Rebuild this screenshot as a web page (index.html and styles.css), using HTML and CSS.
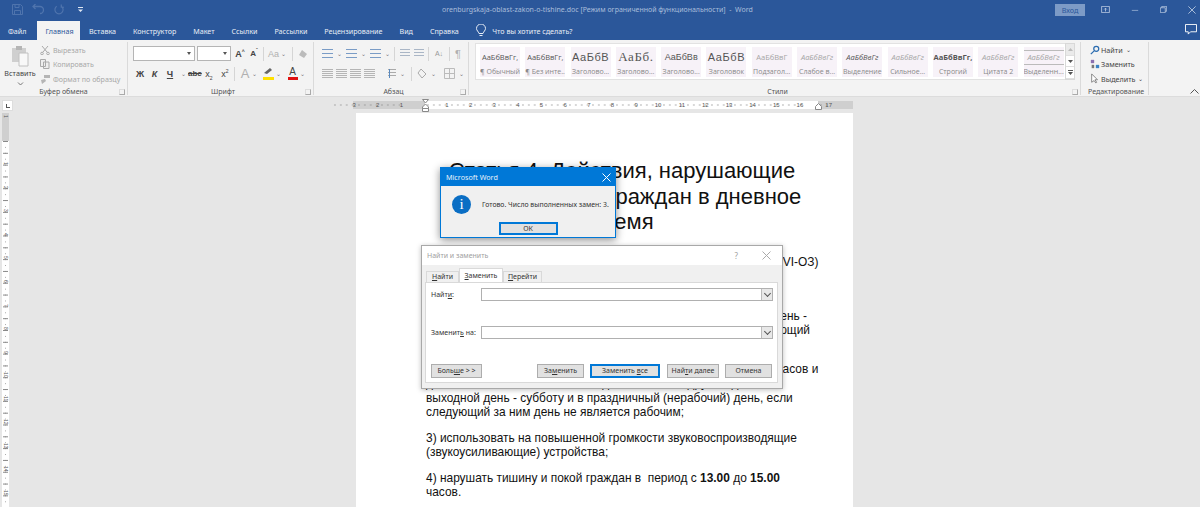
FILE: index.html
```html
<!DOCTYPE html>
<html lang="ru">
<head>
<meta charset="utf-8">
<title>Word</title>
<link rel="stylesheet" href="styles.css">
</head>
<body>
<div class="app">
  <header class="titlebar">
    <div class="qat">
      <svg width="11" height="11" viewBox="0 0 11 11" fill="none" stroke="#4f74ad"><path d="M.5.5h8l2 2v8H.5zM3 .5v3h4v-3M2.500 10.500v-4h6v4"/></svg>
      <svg width="15" height="11" viewBox="0 0 15 11" fill="none" stroke="#4f74ad" stroke-width="1.300"><path d="M9 9.500a3.500 3.500 0 0 0 0-7H2M4.500 0 2 2.500 4.500 5"/></svg>
      <svg width="10" height="11" viewBox="0 0 11 11" fill="none" stroke="#4f74ad" stroke-width="1.300"><path d="M3 2a4.500 4.500 0 1 0 5 0M8 0v3h3"/></svg>
      <svg class="qat-more" width="7" height="7" viewBox="0 0 7 7" fill="#dfe7f3"><path d="M1 1h5v1H1zM1 3.500h5L3.500 6z"/></svg>
    </div>
    <div class="doc-title">orenburgskaja-oblast-zakon-o-tishine.doc [Режим ограниченной функциональности]  -  Word</div>
    <div class="win">
      <span class="login">Вход</span>
      <svg class="w-ribbon" width="9" height="7" viewBox="0 0 11 9" fill="none" stroke="#c8d5e8"><path d="M.5.500h10v8H.5zM5.500 7V3M3.800 4.500l1.700-1.700 1.700 1.700"/></svg>
      <svg class="w-min" width="8" height="8" viewBox="0 0 10 10" stroke="#9db4d3"><path d="M1 5.500h8"/></svg>
      <svg class="w-max" width="7" height="7" viewBox="0 0 10 10" fill="none" stroke="#c8d5e8"><path d="M.5 2.500h7v7h-7zM2.500 2.500v-2h7v7h-2"/></svg>
      <svg width="8" height="8" viewBox="0 0 10 10" stroke="#c8d5e8"><path d="M.5.500l9 9M9.500.500l-9 9"/></svg>
    </div>
  </header>
  <nav class="tabs">
    <span class="tab first">Файл</span>
    <span class="tab active">Главная</span>
    <span class="tab">Вставка</span>
    <span class="tab">Конструктор</span>
    <span class="tab">Макет</span>
    <span class="tab">Ссылки</span>
    <span class="tab">Рассылки</span>
    <span class="tab">Рецензирование</span>
    <span class="tab">Вид</span>
    <span class="tab">Справка</span>
    <span class="tell">
      <svg width="10" height="13" viewBox="0 0 10 13" fill="none" stroke="#e8eef7"><path d="M3 9.500C2.500 7.500.5 6.500.5 4.500a4.500 4.500 0 0 1 9 0c0 2-2 3-2.500 5zM3.500 11.500h3"/></svg>
      Что вы хотите сделать?
    </span>
    <svg class="comment" width="12" height="11" viewBox="0 0 13 12" fill="none" stroke="#fff"><path d="M.5.500h12v8H6L3.500 11V8.500H.5z"/></svg>
  </nav>

  <section class="ribbon">
    <div class="group clip">
      <div class="group-body clip-body">
        <div class="paste">
          <svg width="18" height="22" viewBox="0 0 18 22"><path d="M1 3h14v14H1z" fill="#cfcfcf"/><path d="M5 1h6v4H5z" fill="#b5b5b5"/><path d="M8 8h9v13H8z" fill="#f8f8f8" stroke="#c0c0c0"/></svg>
          <span>Вставить</span>
          <svg width="7" height="4" viewBox="0 0 7 4" fill="none" stroke="#777"><path d="M1 .5l2.500 2.500L6 .5"/></svg>
        </div>
        <div class="clip-list">
          <span><svg width="10" height="10" viewBox="0 0 10 10" fill="none" stroke="#aaa"><path d="M2 1l5 6M8 1L3 7"/><circle cx="2" cy="8.500" r="1.300"/><circle cx="8" cy="8.500" r="1.300"/></svg>Вырезать</span>
          <span><svg width="10" height="10" viewBox="0 0 10 10" fill="#eee" stroke="#aaa"><path d="M.5.500h5v7h-5zM3.500 3h5.500v6.500H3.500z"/></svg>Копировать</span>
          <span><svg width="10" height="10" viewBox="0 0 10 10" fill="#b5b5b5"><path d="M4 1h6v3H4zM1 6l4-1 1 2-4 3z"/></svg>Формат по образцу</span>
        </div>
      </div>
      <div class="group-name">Буфер обмена<i class="launch"></i></div>
    </div>
    <div class="group font">
      <div class="group-body rows">
        <div class="row">
          <span class="combo w62"><b class="caret"></b></span>
          <span class="combo w34"><b class="caret"></b></span>
          <span class="ic bold w14 ml2">A<sup>^</sup></span>
          <span class="ic bold small w14">A<sup>ˇ</sup></span>
          <span class="sep ml2"></span>
          <span class="ic pale w11 ml4">Aa</span><small class="dd">⌄</small>
          <span class="sep ml3"></span>
          <svg class="ml5" width="10" height="10" viewBox="0 0 10 10" fill="#bbb"><path d="M4 1l5 4-3 4-5-3z"/></svg>
        </div>
        <div class="row fmt">
          <span class="ic bold">Ж</span>
          <span class="ic it">К</span>
          <span class="ic und">Ч</span><small class="dd">⌄</small>
          <span class="ic abc">abc</span>
          <span class="ic ml1">x<sub>2</sub></span>
          <span class="ic">x<sup>2</sup></span>
          <span class="sep ml1"></span>
          <span class="ic pale big ml5">A</span><small class="dd">⌄</small>
          <span class="ic hl ml3"><svg width="10" height="7" viewBox="0 0 10 7" fill="#666"><path d="M1 5l6-5 2 2-5 4z"/></svg></span><small class="dd">⌄</small>
          <span class="ic red ml5">A</span><small class="dd">⌄</small>
        </div>
      </div>
      <div class="group-name">Шрифт<i class="launch"></i></div>
    </div>
    <div class="group para">
      <div class="group-body rows">
        <div class="row para-row">
          <i class="list"></i><small class="dd">⌄</small>
          <i class="list"></i><small class="dd">⌄</small>
          <i class="list"></i><small class="dd">⌄</small>
          <span class="sep"></span>
          <i class="lines ind ml5"></i>
          <i class="lines ind ml4"></i>
          <span class="sep ml4"></span>
          <span class="ic sort ml5">А↓</span>
          <span class="sep ml5"></span>
          <span class="ic pale pil ml4">¶</span>
        </div>
        <div class="row para-row">
          <i class="lines"></i><i class="lines"></i><i class="lines"></i><i class="lines"></i>
          <i class="lines spacing ml10"></i><small class="dd">⌄</small>
          <span class="sep ml2"></span>
          <svg class="ml5" width="10" height="11" viewBox="0 0 10 11" fill="none" stroke="#aaa"><path d="M4 1l5 5-4 4-4-5z"/></svg><small class="dd">⌄</small>
          <svg class="ml3" width="11" height="11" viewBox="0 0 11 11" fill="none" stroke="#bbb"><path d="M.5.500h10v10H.5zM5.500.500v10M.5 5.500h10"/></svg><small class="dd">⌄</small>
        </div>
      </div>
      <div class="group-name">Абзац<i class="launch"></i></div>
    </div>
    <div class="group styles">
      <div class="group-body gallery-wrap">
        <div class="gallery">
          <div class="st"><span class="s1">АаБбВвГг,</span><em>¶ Обычный</em></div>
          <div class="st"><span class="s1">АаБбВвГг,</span><em>¶ Без инте...</em></div>
          <div class="st"><span class="s2">АаБбВ</span><em>Заголово...</em></div>
          <div class="st"><span class="s3">АаБб.</span><em>Заголово...</em></div>
          <div class="st"><span class="s4">АаБбВв</span><em>Заголово...</em></div>
          <div class="st"><span class="s2">АаБбВ</span><em>Заголовок</em></div>
          <div class="st"><span class="s1 soft">АаБбВвГ</span><em>Подзагол...</em></div>
          <div class="st"><span class="s1 soft it">АаБбВвГг</span><em>Слабое в...</em></div>
          <div class="st"><span class="s1 it">АаБбВвГг</span><em>Выделение</em></div>
          <div class="st"><span class="s1 soft it">АаБбВвГг</span><em>Сильное...</em></div>
          <div class="st"><span class="s1 strong">АаБбВвГг,</span><em>Строгий</em></div>
          <div class="st"><span class="s1 soft it">АаБбВвГг</span><em>Цитата 2</em></div>
          <div class="st"><span class="s1 soft it ruled">АаБбВвГг</span><em>Выделенн...</em></div>
        </div>
        <div class="scroll">
          <b><svg width="5" height="3" viewBox="0 0 5 3" fill="#bbb"><path d="M2.500 0 5 3H0z"/></svg></b>
          <b><svg width="5" height="3" viewBox="0 0 5 3" fill="#555"><path d="M0 0h5L2.500 3z"/></svg></b>
          <b><svg width="5" height="5" viewBox="0 0 5 5" fill="#555"><path d="M0 0h5v1H0zM0 2h5L2.500 5z"/></svg></b>
        </div>
      </div>
      <div class="group-name">Стили<i class="launch"></i></div>
    </div>
    <div class="group edit">
      <div class="group-body edit-list">
        <span><svg width="10" height="10" viewBox="0 0 12 12" fill="none" stroke="#2b6cb0" stroke-width="1.500"><circle cx="7.500" cy="4.500" r="3"/><path d="M5 7l-4 4"/></svg>Найти <small>⌄</small></span>
        <span><svg width="10" height="10" viewBox="0 0 12 12"><path d="M1 1h4v4H1z" fill="#8a6fb0"/><path d="M7 7h4v4H7z" fill="#3b82c4"/><path d="M2 7h3v4H2z" fill="#777"/></svg>Заменить</span>
        <span><svg width="10" height="11" viewBox="0 0 12 13" fill="#fff" stroke="#777"><path d="M2 1v10l3-2 2 3 1-1-2-3h3z"/></svg>Выделить <small>⌄</small></span>
      </div>
      <div class="group-name">Редактирование</div>
    </div>
    <svg class="collapse" width="9" height="5" viewBox="0 0 9 5" fill="none" stroke="#555"><path d="M.5 4.500l4-4 4 4"/></svg>
  </section>

  <div class="ruler-row">
    <span class="corner"><i></i></span>
    <div class="ruler">
      <div class="r-margin"><span>3</span><span>2</span><span>1</span></div>
      <div class="r-main">
        <span>1</span><span>2</span><span>3</span><span>4</span><span>5</span><span>6</span><span>7</span><span>8</span><span>9</span><span>10</span><span>11</span><span>12</span><span>13</span><span>14</span><span>15</span><span>16</span>
      </div>
      <div class="r-end"><span>17</span></div>
    </div>
    <svg class="m-left" width="7" height="13" viewBox="0 0 7 13" fill="#fff" stroke="#888"><path d="M.5.500h6L3.500 4 .5.500zM.5 8 3.500 5l3 3v1.500h-6zM.5 9.500h6v3h-6z"/></svg>
    <svg class="m-right" width="7" height="7" viewBox="0 0 7 7" fill="#fff" stroke="#888"><path d="M3.500.5l3 3v3h-6v-3z"/></svg>
  </div>

  <main class="work">
    <div class="vruler">
      <div class="v-top"><span>1</span></div>
      <div class="v-main">
        <span>1</span><span>2</span><span>3</span><span>4</span><span>5</span><span>6</span><span>7</span><span>8</span><span>9</span><span>10</span><span>11</span><span>12</span><span>13</span><span>14</span><span>15</span>
      </div>
    </div>
    <div class="page">
      <h1>Статья 4. Действия, нарушающие тишину и покой граждан в дневное время</h1>
      <p class="law">(в ред. Закона Оренбургской области от 01.01.2020 N 0000/000-VI-ОЗ)</p>
      <p class="lead">На территории Оренбургской области запрещается:<br>1) проводить ремонтные работы в период с 09.00 ч в рабочий день -<br>в понедельник, вторник, в среду, в четверг, пятницу, если следующий<br>за ним день является рабочим;</p>
      <p><span class="wide">2) проводить работы с применением шумовой техники с 19.00 часов и</span><br>до 09.00 часов, с 19.00 часов и до 10.00 часов другого дня в<br>выходной день - субботу и в праздничный (нерабочий) день, если<br>следующий за ним день не является рабочим;</p>
      <p>3) использовать на повышенной громкости звуковоспроизводящие<br>(звукоусиливающие) устройства;</p>
      <p>4) нарушать тишину и покой граждан в&nbsp; период с <b>13.00</b> до <b>15.00</b><br>часов.</p>
    </div>
  </main>

  <div class="dlg msg">
    <div class="msg-title"><span>Microsoft Word</span><svg width="9" height="9" viewBox="0 0 9 9" stroke="#fff"><path d="M.5.500l8 8M8.500.500l-8 8"/></svg></div>
    <div class="msg-body">
      <span class="info">i</span>
      <span>Готово. Число выполненных замен: 3.</span>
    </div>
    <div class="msg-foot"><button class="btn focus ok">ОК</button></div>
  </div>

  <div class="dlg find">
    <div class="find-title"><span>Найти и заменить</span><span class="q">?</span><svg width="9" height="9" viewBox="0 0 9 9" stroke="#aaa"><path d="M.5.500l8 8M8.500.500l-8 8"/></svg></div>
    <div class="find-tabs">
      <span class="ft t1"><u>Н</u>айти</span>
      <span class="ft on"><u>З</u>аменить</span>
      <span class="ft t3"><u>П</u>ерейти</span>
    </div>
    <div class="find-panel">
      <div class="field"><label>Найт<u>и</u>:</label><div class="input"><b class="drop"></b></div></div>
      <div class="field"><label>Заменит<u>ь</u> на:</label><div class="input"><b class="drop"></b></div></div>
      <div class="find-btns">
        <button class="btn more">Боль<u>ш</u>е &gt; &gt;</button>
        <button class="btn rep">За<u>м</u>енить</button>
        <button class="btn focus all">Заменить <u>в</u>се</button>
        <button class="btn next">Най<u>т</u>и далее</button>
        <button class="btn cancel">Отмена</button>
      </div>
    </div>
  </div>
</div>
</body>
</html>
```
FILE: styles.css
```css
* { box-sizing: border-box; }
html, body { margin: 0; height: 100%; overflow: hidden; }
body { font-family: "Noto Sans", "Open Sans", sans-serif; font-size: 7px; color: #444; }
.app { position: relative; width: 1200px; height: 507px; display: flex; flex-direction: column; background: #e6e6e6; overflow: hidden; }

.ml1 { margin-left: 1px; }
.ml2 { margin-left: 2px; }
.ml3 { margin-left: 3.500px; }
.ml4 { margin-left: 4px; }
.ml5 { margin-left: 5px; }
.ml10 { margin-left: 10px; }

.titlebar { height: 19px; background: #2b579a; display: flex; align-items: center; padding: 0 0 0 12px; flex: none; position: relative; }
.qat { display: flex; align-items: center; gap: 8px; width: 300px; }
.qat-more { margin-left: 5px; }
.doc-title { position: absolute; left: 442px; top: 4px; font-size: 7px; line-height: 12px; color: #a9bedb; white-space: pre; }
.win { margin-left: auto; display: flex; align-items: center; height: 19px; padding-right: 4px; }
.login { width: 30px; height: 12px; margin: 1px 16px 0 0; background: #7d9bc6; color: #2b579a; text-align: center; line-height: 12px; font-size: 7.200px; }
.w-ribbon { margin-right: 21px; }
.w-min { margin-right: 21px; }
.w-max { margin-right: 21px; }

.tabs { height: 21px; background: #2b579a; display: flex; align-items: flex-end; flex: none; position: relative; color: #fff; font-size: 7.150px; }
.tab { height: 19px; padding: 0 8.500px; line-height: 21px; color: #e9eef6; white-space: nowrap; }
.tab.first { padding: 0 11px 0 8px; }
.tab.active { background: #f3f3f3; color: #2b579a; padding: 0 8px; width: 43px; text-align: center; }
.tell { display: flex; align-items: center; gap: 6px; margin-left: 9px; height: 19px; color: #e9eef6; white-space: nowrap; }
.comment { position: absolute; right: 3px; top: 5px; }

.ribbon { height: 57px; background: #f3f3f3; display: flex; flex: none; position: relative; border-bottom: 1px solid #dcdcdc; }
.group { position: relative; display: flex; flex-direction: column; border-right: 1px solid #dadada; height: 53px; margin-top: 2px; flex: none; }
.group-body { height: 45px; flex: none; }
.group-name { height: 10px; line-height: 10px; text-align: center; font-size: 7px; position: relative; color: #555; }
.launch { position: absolute; right: 2px; top: 2px; width: 6px; height: 6px; border: 1px solid #aaa; border-top-color: #ddd; border-left-color: #ddd; }
.clip { width: 128px; }
.clip-body { display: flex; padding: 3px 0 0 5px; }
.paste { width: 30px; display: flex; flex-direction: column; align-items: center; color: #444; font-size: 7.200px; }
.paste span { margin: 1px 0 3px; line-height: 11px; }
.clip-list { display: flex; flex-direction: column; gap: 3.500px; padding-left: 5px; margin-top: -1px; color: #a8a8a8; font-size: 7.100px; white-space: nowrap; }
.clip-list span { display: flex; align-items: center; gap: 3px; height: 11px; }

.font { width: 186px; padding-left: 5px; }
.para { width: 155px; padding-left: 5px; }
.rows { display: flex; flex-direction: column; gap: 5px; padding-top: 4px; }
.row { display: flex; align-items: center; height: 15px; white-space: nowrap; }
.combo { height: 15px; background: #fff; border: 1px solid #b5b5b5; position: relative; display: block; margin-right: 2px; flex: none; }
.w62 { width: 62px; }
.w34 { width: 34px; margin-right: 0; }
.caret { position: absolute; right: 3px; top: 5px; border: 2px solid transparent; border-top: 3px solid #555; }
.ic { display: inline-block; flex: none; width: 16px; text-align: center; font-family: "Liberation Sans", sans-serif; font-size: 9px; color: #444; }
.ic sup, .ic sub { font-size: 5px; line-height: 0; }
.bold { font-weight: 700; }
.small { font-size: 8px; }
.w14 { width: 14px; }
.w11 { width: 11px; }
.pale { color: #b0b0b0; }
.sep { width: 1px; height: 14px; background: #d5d5d5; flex: none; }
.fmt { margin-left: -1px; }
.ic.it { font-style: italic; font-weight: 700; width: 13px; }
.und { text-decoration: underline; font-weight: 700; width: 18px; }
.abc { text-decoration: line-through; font-size: 8px; font-weight: 700; width: 12px; }
.dd { font-size: 6px; color: #777; width: 9px; text-align: center; flex: none; }
.big { font-size: 13px; width: 10px; }
.hl { width: 11px; height: 12px; border-bottom: 3px solid #ffe000; line-height: 9px; }
.red { width: 10px; height: 13px; line-height: 10px; border-bottom: 3px solid #e01010; font-size: 10px; }
.list { width: 11px; height: 10px; flex: none; background: repeating-linear-gradient(#7a9cc6 0 1px, transparent 1px 4px); }
.para-row { padding-left: 3px; }
.para-row .dd { width: 13px; }
.lines { width: 11px; height: 9px; flex: none; background: repeating-linear-gradient(#b5b5b5 0 1px, transparent 1px 2px); margin-right: 3px; }
.lines.ind { background: repeating-linear-gradient(#aab6c6 0 1px, transparent 1px 3px); margin-right: 0; width: 10px; }
.lines.spacing { width: 8px; margin-right: 0; background: linear-gradient(#5a8ac0, #5a8ac0) 1px 0/1px 100% no-repeat, repeating-linear-gradient(#aaa 0 1px, transparent 1px 3px); }
.ic.sort { width: 10px; color: #999; font-size: 7px; }
.ic.pil { font-size: 11px; width: 8px; }

.styles { width: 612px; padding-left: 6px; }
.gallery-wrap { display: flex; padding-top: 1px; }
.gallery { background: #fff; width: 590px; height: 37px; display: flex; gap: 5.300px; padding: 3px 4px; border: 1px solid #e2e2e2; border-right: 0; flex: none; }
.st { width: 40px; height: 30px; background: #f7f2f8; text-align: center; font-family: "Open Sans", sans-serif; display: flex; flex-direction: column; flex: none; overflow: hidden; white-space: nowrap; }
.st span { display: block; height: 20px; line-height: 20px; font-size: 7.500px; color: #555; overflow: hidden; }
.st em { font-style: normal; font-size: 7px; color: #888; line-height: 10px; }
.st .s2 { font-size: 11px; font-family: "Liberation Sans", sans-serif; letter-spacing: .6px; }
.st .s3 { font-size: 13px; font-family: "Liberation Serif", serif; letter-spacing: .6px; }
.st .s4 { font-size: 9px; font-family: "Liberation Sans", sans-serif; }
.st .soft { color: #a5a5a5; }
.st .it { font-style: italic; font-weight: 400; }
.st .strong { font-weight: 700; }
.st .ruled { height: 15px; line-height: 13px; margin: 3px 0 2px; border-top: 1px solid #bbb; border-bottom: 1px solid #bbb; }
.scroll { width: 10px; height: 37px; display: flex; flex-direction: column; border: 1px solid #d8d8d8; background: #fff; flex: none; }
.scroll b { flex: 1; display: flex; align-items: center; justify-content: center; border-bottom: 1px solid #e0e0e0; }
.scroll b:first-child { background: #eaeaea; }

.edit { width: 68px; padding-left: 7px; }
.edit-list { display: flex; flex-direction: column; gap: 3.500px; padding: 2px 0 0 2px; font-size: 7.200px; }
.edit-list span { height: 11px; display: flex; align-items: center; gap: 1px; white-space: nowrap; }
.edit-list small { font-size: 6px; margin-left: 2px; }
.edit .group-name { text-align: left; }
.collapse { position: absolute; right: 1px; top: 49px; }

.ruler-row { height: 16px; background: #e6e6e6; display: flex; flex: none; align-items: center; position: relative; }
.corner { width: 11px; height: 11px; background: #fff; margin-left: 2px; display: block; position: relative; border: 1px solid #ddd; flex: none; }
.corner i { position: absolute; left: 3px; top: 3px; width: 4px; height: 4px; border-left: 1px solid #555; border-bottom: 1px solid #555; display: block; }
.ruler { margin-left: 340px; width: 500px; height: 8px; display: flex; font-size: 6px; line-height: 8px; font-family: "Liberation Sans", sans-serif; color: #555; white-space: nowrap; flex: none; }
.ruler span { display: block; flex: none; width: 23.650px; text-align: right; background: radial-gradient(circle, #888 .5px, transparent .8px) 0 50%/5.900px 100% repeat-x; }
.r-margin { width: 72px; background: #cfcfcf; flex: none; display: flex; justify-content: flex-end; padding-right: 22px; }
.r-main { width: 393px; background: #fff; flex: none; display: flex; }
.r-end { width: 35px; background: #cfcfcf; flex: none; display: flex; }
.ruler .r-end span { width: 14px; }
.m-left { position: absolute; left: 422px; top: 2px; }
.m-right { position: absolute; left: 815px; top: 6px; }

.work { flex: 1; min-height: 0; display: flex; position: relative; }
.vruler { width: 7px; margin-left: 2px; display: flex; flex-direction: column; flex: none; font-family: "Liberation Sans", sans-serif; font-size: 5px; color: #555; }
.v-top { height: 28px; background: #cfcfcf; flex: none; }
.v-top span { display: block; writing-mode: vertical-rl; text-align: center; line-height: 7px; padding-top: 2px; }
.v-main { flex: 1; background-color: #fff; background-image: linear-gradient(#888 1px, transparent 1px), linear-gradient(#aaa 1px, transparent 1px); background-size: 5px 11.825px, 1px 5.912px; background-position: 1px 11.825px, 3px 5.912px; background-repeat: repeat-y; overflow: hidden; }
.v-main span { display: block; height: 23.650px; writing-mode: vertical-rl; line-height: 7px; text-align: end; }
.page { width: 497px; margin-left: 347px; height: 500px; background: #fff; padding: 45px 30px 0 70px; font-family: "Liberation Sans", sans-serif; color: #111; font-size: 11.930px; line-height: 14.300px; flex: none; white-space: nowrap; }
.page h1 { margin: 0 0 20px 16px; width: 360px; font-size: 22px; line-height: 25.500px; font-weight: 400; text-align: center; white-space: normal; }
.page p { margin: 0 0 11.500px; }
.page .law { margin-bottom: 26px; word-spacing: .3px; }
.page .lead { margin-bottom: 10px; }
.wide { word-spacing: .2px; }

.dlg { position: absolute; font-family: "Noto Sans", sans-serif; }
.msg { left: 440px; top: 167px; width: 176px; height: 71px; background: #f0f0f0; border: 1px solid #0078d7; box-shadow: 0 2px 8px rgba(0,0,0,.45); z-index: 2; }
.msg-title { height: 18px; background: #0078d7; color: #e8f2fb; display: flex; justify-content: space-between; align-items: center; padding: 0 4px 0 5px; font-size: 7.200px; }
.msg-body { display: flex; align-items: center; gap: 11px; padding: 8px 0 0 11px; font-size: 6.900px; color: #333; height: 29px; white-space: nowrap; }
.info { width: 19px; height: 19px; border-radius: 50%; background: #0a6ec4; color: #fff; font-family: "Liberation Serif", serif; font-size: 15px; line-height: 19px; text-align: center; flex: none; }
.msg-foot { display: flex; justify-content: center; padding-top: 7px; }
.btn { height: 13px; padding: 0; background: #e1e1e1; border: 1px solid #adadad; font: inherit; font-size: 7px; color: #333; line-height: 10px; white-space: nowrap; }
.btn.focus { border: 2px solid #0078d7; }
.ok { width: 59px; }

.find { left: 421px; top: 245px; width: 362px; height: 144px; background: #f0f0f0; border: 1px solid #a8a8a8; box-shadow: 0 1px 5px rgba(0,0,0,.25); z-index: 3; }
.find-title { height: 19px; background: #fff; display: flex; align-items: center; padding: 0 11px 0 5px; color: #a0a0a0; font-size: 7px; }
.find-title span:first-child { flex: 1; }
.q { margin-right: 24px; font-size: 8px; }
.find-tabs { display: flex; padding-left: 4px; height: 17px; align-items: flex-end; font-size: 7px; color: #333; }
.ft { height: 11px; line-height: 10px; background: #f0f0f0; border: 1px solid #d9d9d9; border-bottom: 0; text-align: center; }
.t1 { width: 33px; }
.t3 { width: 39px; }
.ft.on { width: 44px; height: 14px; line-height: 13px; background: #fff; }
.find-panel { margin-left: 3px; width: 353px; height: 101px; background: #fff; border: 1px solid #d9d9d9; padding: 5px 4px 0 5px; font-size: 7px; color: #333; }
.field { display: flex; align-items: center; height: 13px; margin-bottom: 25px; }
.field label { width: 50px; flex: none; white-space: nowrap; }
.input { flex: 1; height: 13px; border: 1px solid #b0b0b0; background: #fff; position: relative; }
.drop { position: absolute; right: 0; top: 0; width: 11px; height: 11px; background: #e8e8e8; border-left: 1px solid #bbb; }
.drop::after { content: ""; position: absolute; left: 3px; top: 2px; width: 4px; height: 4px; border-right: 1px solid #555; border-bottom: 1px solid #555; transform: rotate(45deg); }
.find-btns { display: flex; align-items: center; }
.find-btns .btn { height: 14px; flex: none; }
.more { width: 51px; margin-right: 55px; }
.rep { width: 47px; margin-right: 6px; }
.all { width: 70px; margin-right: 7px; }
.next { width: 52px; margin-right: 6px; }
.cancel { width: 47px; }
```
